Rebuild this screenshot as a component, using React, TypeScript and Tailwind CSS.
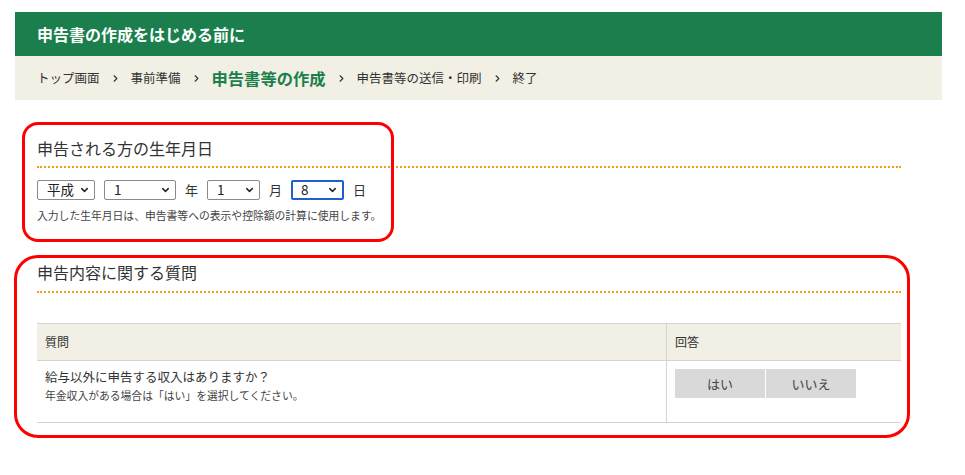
import { ChevronDown, ChevronRight } from "lucide-react";

const font = { fontFamily: '"Noto Sans CJK JP", "Noto Sans", sans-serif' };

function Select({ value, width, focused }: { value: string; width: string; focused?: boolean }) {
  return (
    <div
      className={`relative flex h-[20px] items-center rounded-[2px] bg-white text-[13.5px] leading-none text-[#222] ${width} ${
        focused ? "border-2 border-[#1f5fd0] pl-[8px]" : "border border-[#8a8a8a] pl-[9px]"
      }`}
    >
      <span>{value}</span>
      <ChevronDown className="absolute right-[4px] top-1/2 h-[11px] w-[11px] -translate-y-1/2 text-[#222]" strokeWidth={3.2} />
    </div>
  );
}

function Crumb({ children }: { children: React.ReactNode }) {
  return <span className="text-[12.5px] text-[#333]">{children}</span>;
}

function Sep() {
  return <ChevronRight className="mx-[10px] h-[11px] w-[11px] text-[#333]" strokeWidth={2.4} />;
}

export default function App() {
  return (
    <div className="relative min-h-[475px] bg-white pl-[15px] pt-[12px]" style={font}>
      <div className="w-[927px]">
        <div className="flex h-[44px] items-center bg-[#1a7f4c] pl-[22px] text-[16px] font-bold text-white">
          申告書の作成をはじめる前に
        </div>
        <div className="flex h-[44px] items-center bg-[#f2efe4] pl-[22px]">
          <Crumb>トップ画面</Crumb>
          <Sep />
          <Crumb>事前準備</Crumb>
          <Sep />
          <span className="text-[16.3px] font-bold text-[#1a7f4c]">申告書等の作成</span>
          <Sep />
          <Crumb>申告書等の送信・印刷</Crumb>
          <Sep />
          <Crumb>終了</Crumb>
        </div>
      </div>

      <div className="ml-[22px] w-[864px]">
        <section className="mt-[36px]">
          <h2 className="border-b-2 border-dotted border-[#f0a020] pb-[6px] text-[16px] leading-[24px] text-[#333]">
            申告される方の生年月日
          </h2>
          <div className="mt-[12px] flex items-center text-[13px] text-[#333]">
            <Select value="平成" width="w-[58px]" />
            <div className="w-[9px]" />
            <Select value="1" width="w-[72px]" />
            <span className="px-[9px]">年</span>
            <Select value="1" width="w-[53px]" />
            <span className="px-[9px]">月</span>
            <Select value="8" width="w-[53px]" focused />
            <span className="px-[9px]">日</span>
          </div>
          <p className="mt-[7px] text-[10.8px] leading-[16px] text-[#444]">
            入力した生年月日は、申告書等への表示や控除額の計算に使用します。
          </p>
        </section>

        <section className="mt-[37px]">
          <h2 className="border-b-2 border-dotted border-[#f0a020] pb-[7px] text-[16px] leading-[24px] text-[#333]">
            申告内容に関する質問
          </h2>
          <div className="mt-[30px] border-t border-b border-[#d4d4d4]">
            <div className="grid h-[37px] grid-cols-[630px_1fr] border-b border-[#d4d4d4] bg-[#f2efe4] text-[12px] text-[#333]">
              <div className="flex items-center border-r border-[#d4d4d4] pl-[8px]">質問</div>
              <div className="flex items-center pl-[8px]">回答</div>
            </div>
            <div className="grid h-[61px] grid-cols-[630px_1fr]">
              <div className="border-r border-[#d4d4d4] pl-[8px] pt-[6px]">
                <div className="text-[12.5px] leading-[20px] text-[#333]">給与以外に申告する収入はありますか？</div>
                <div className="text-[10.8px] leading-[16px] text-[#444]">年金収入がある場合は「はい」を選択してください。</div>
              </div>
              <div className="flex items-start gap-[1px] pl-[8px] pt-[8px]">
                <button className="h-[29px] w-[90px] bg-[#d9d9d9] text-[13px] text-[#444]">はい</button>
                <button className="h-[29px] w-[90px] bg-[#d9d9d9] text-[13px] text-[#444]">いいえ</button>
              </div>
            </div>
          </div>
        </section>
      </div>

      <div className="pointer-events-none absolute left-[22px] top-[122px] h-[120px] w-[372px] rounded-[16px] border-[3px] border-[#ff0000]" />
      <div className="pointer-events-none absolute left-[14px] top-[255px] h-[183px] w-[896px] rounded-[24px] border-[3px] border-[#ff0000]" />
    </div>
  );
}
